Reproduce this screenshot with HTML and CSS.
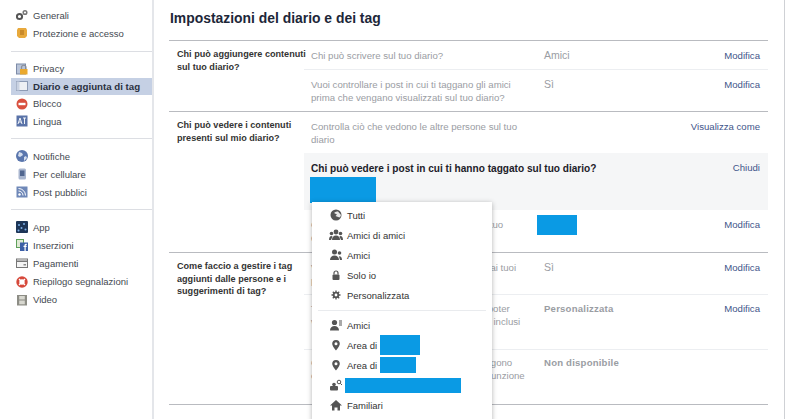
FILE: index.html
```html
<!DOCTYPE html>
<html lang="it">
<head>
<meta charset="utf-8">
<title>Impostazioni del diario e dei tag</title>
<link rel="stylesheet" href="styles.css">
</head>
<body>
<div class="page">
  <aside class="sidebar">
    <ul class="group first">
      <li class="item"><svg class="ic" viewBox="0 0 12 12"><circle cx="3.500" cy="7.500" r="2.600" fill="none" stroke="#555" stroke-width="2"/><circle cx="9" cy="3.500" r="1.800" fill="none" stroke="#777" stroke-width="1.500"/></svg>Generali</li>
      <li class="item"><svg class="ic" viewBox="0 0 12 12"><path d="M2 1h8l1 2v6l-2 2H3L1 9V3z" fill="#e8a93c"/><rect x="4" y="3" width="4" height="5" fill="#c98a2a"/></svg>Protezione e accesso</li>
    </ul>
    <ul class="group second">
      <li class="item"><svg class="ic" viewBox="0 0 12 12"><rect x="0.500" y="1" width="9" height="10" fill="#b9c4d8" stroke="#7d8ba8"/><rect x="4" y="6" width="7.500" height="5.500" fill="#eaa92f"/><path d="M5.500 6V4.500a2.200 2.200 0 0 1 4.500 0V6" fill="none" stroke="#8a8f99" stroke-width="1.200"/></svg>Privacy</li>
      <li class="item active"><svg class="ic" viewBox="0 0 12 12"><rect x="0.500" y="1.500" width="11" height="9" fill="#eef0f4" stroke="#8d9bb5"/><rect x="0.500" y="1.500" width="3" height="9" fill="#c9d2e2"/></svg>Diario e aggiunta di tag</li>
      <li class="item"><svg class="ic" viewBox="0 0 12 12"><circle cx="6" cy="6" r="5.500" fill="#d9503f"/><rect x="2.500" y="4.800" width="7" height="2.400" fill="#fff"/></svg>Blocco</li>
      <li class="item"><svg class="ic" viewBox="0 0 12 12"><rect x="0.500" y="0.500" width="11" height="11" fill="#5a73a8"/><path d="M2 9l2-6 2 6M3 7h2M7 3h3M8.500 3v6" fill="none" stroke="#fff" stroke-width="0.900"/></svg>Lingua</li>
    </ul>
    <ul class="group">
      <li class="item"><svg class="ic" viewBox="0 0 12 12"><circle cx="6" cy="6" r="6" fill="#5a76ad"/><path d="M3 2l3 1 1 2-3 2-2-1zM8 7l2-1 1 2-3 3z" fill="#d5deee"/></svg>Notifiche</li>
      <li class="item"><svg class="ic" viewBox="0 0 12 12"><rect x="2.500" y="0.500" width="7.500" height="11" rx="1.500" fill="#a9b6cf"/><rect x="4" y="2.500" width="4.500" height="5.500" fill="#51668f"/></svg>Per cellulare</li>
      <li class="item"><svg class="ic" viewBox="0 0 12 12"><rect x="0.500" y="0.500" width="11" height="11" fill="#6f88b8"/><circle cx="3.500" cy="8.500" r="1.200" fill="#fff"/><path d="M2.500 5a4.500 4.500 0 0 1 4.500 4.500M2.500 2.500a7 7 0 0 1 7 7" fill="none" stroke="#fff"/></svg>Post pubblici</li>
    </ul>
    <ul class="group fourth">
      <li class="item"><svg class="ic" viewBox="0 0 12 12"><rect width="12" height="12" rx="1" fill="#1d3557"/><circle cx="3" cy="4" r="1" fill="#7db0e8"/><circle cx="8" cy="3" r="1" fill="#7db0e8"/><circle cx="5.500" cy="7" r="1" fill="#7db0e8"/><circle cx="9.500" cy="8.500" r="1" fill="#7db0e8"/><circle cx="2.500" cy="9.500" r="1" fill="#7db0e8"/></svg>App</li>
      <li class="item"><svg class="ic" viewBox="0 0 12 12"><rect x="0.500" y="0.500" width="7" height="8" fill="#dfe9d4" stroke="#5fa05a"/><rect x="4" y="3.500" width="8" height="8.500" fill="#3b5ea6"/><path d="M8.500 12V8H7.500V6.800h1V6q0-1.200 1.500-1.200h.8v1.200h-.6q-.5 0-.5.500v.3h1.100l-.2 1.200h-.9v4z" fill="#fff"/></svg>Inserzioni</li>
      <li class="item"><svg class="ic" viewBox="0 0 12 12"><rect x="0.500" y="2" width="11" height="8.500" fill="#f4f4f4" stroke="#777"/><rect x="1" y="3.500" width="10" height="1.500" fill="#777"/><rect x="7.500" y="7" width="2.500" height="1.500" fill="#888"/></svg>Pagamenti</li>
      <li class="item"><svg class="ic" viewBox="0 0 12 12"><circle cx="6" cy="6" r="4.200" fill="none" stroke="#d6483a" stroke-width="3"/><path d="M3 3l1.500 1.500M9 3L7.500 4.500M3 9l1.500-1.500M9 9L7.500 7.500" stroke="#fff" stroke-width="1.300"/></svg>Riepilogo segnalazioni</li>
      <li class="item"><svg class="ic" viewBox="0 0 12 12"><rect x="1" y="1" width="10" height="10.500" fill="#8d8d85"/><rect x="3.200" y="2" width="5.600" height="3.500" fill="#d8d8d0"/><rect x="3.200" y="6.500" width="5.600" height="3.800" fill="#d8d8d0"/></svg>Video</li>
    </ul>
  </aside>

  <main class="content">
    <h1 class="title">Impostazioni del diario e dei tag</h1>

    <section class="section">
      <h2 class="sec-title">Chi può aggiungere contenuti<br>sul tuo diario?</h2>
      <div class="rows">
        <div class="row r29">
          <div class="desc">Chi può scrivere sul tuo diario?</div>
          <div class="value">Amici</div>
          <a class="link">Modifica</a>
        </div>
        <div class="row last">
          <div class="desc">Vuoi controllare i post in cui ti taggano gli amici<br>prima che vengano visualizzati sul tuo diario?</div>
          <div class="value">Sì</div>
          <a class="link">Modifica</a>
        </div>
      </div>
    </section>

    <section class="section">
      <h2 class="sec-title">Chi può vedere i contenuti<br>presenti sul mio diario?</h2>
      <div class="rows">
        <div class="row last">
          <div class="desc">Controlla ciò che vedono le altre persone sul tuo<br>diario</div>
          <div class="value"></div>
          <a class="link">Visualizza come</a>
        </div>
        <div class="panel">
          <div class="panel-head">
            <strong class="panel-title">Chi può vedere i post in cui ti hanno taggato sul tuo diario?</strong>
            <a class="link">Chiudi</a>
          </div>
          <div class="redact panel-redact"></div>
        </div>
        <div class="row r42 last">
          <div class="desc">Chi può vedere i post in cui ti taggano sul tuo<br>diario?</div>
          <div class="value"><div class="redact value-redact"></div></div>
          <a class="link">Modifica</a>
        </div>
      </div>
    </section>

    <section class="section">
      <h2 class="sec-title">Come faccio a gestire i tag<br>aggiunti dalle persone e i<br>suggerimenti di tag?</h2>
      <div class="rows">
        <div class="row r42">
          <div class="desc">Vuoi controllare i tag che altri aggiungono ai tuoi<br>post prima che appaiano?</div>
          <div class="value">Sì</div>
          <a class="link">Modifica</a>
        </div>
        <div class="row r55">
          <div class="desc">Ti taggano in un post, chi vuoi che possa poter<br>vedere il post anche se non sono mai stati inclusi</div>
          <div class="value strong">Personalizzata</div>
          <a class="link">Modifica</a>
        </div>
        <div class="row r54 last">
          <div class="desc">Chi vede i suggerimenti di tag quando vengono<br>caricate foto che ti ritraggono? Non c'è la funzione</div>
          <div class="value strong">Non disponibile</div>
        </div>
      </div>
    </section>

    <div class="menu">
      <ul class="menu-list">
        <li class="menu-item"><svg class="mi" viewBox="0 0 12 12"><circle cx="6" cy="6" r="5.500" fill="#555"/><path d="M8 2.500a4 4 0 0 0-4 1.500l3 1.500-1.500 1.500 4 1.500A4 4 0 0 0 11 6z" fill="#e8e8e8"/></svg>Tutti</li>
        <li class="menu-item"><svg class="mi wide" viewBox="0 0 14 12"><g fill="#555"><circle cx="7" cy="3" r="2.400"/><path d="M3 11c0-3 1.500-4.500 4-4.500s4 1.500 4 4.500z"/><circle cx="2.500" cy="4.500" r="1.800"/><path d="M0 11c0-2.500 1-4 2.500-4l1 .5L2 11z"/><circle cx="11.500" cy="4.500" r="1.800"/><path d="M14 11c0-2.500-1-4-2.500-4l-1 .5L12 11z"/></g></svg>Amici di amici</li>
        <li class="menu-item"><svg class="mi" viewBox="0 0 12 12"><g fill="#555"><circle cx="4.500" cy="3" r="2.500"/><path d="M0 11c0-3 2-4.500 4.500-4.500S9 8 9 11z"/><circle cx="9.500" cy="4" r="1.800"/><path d="M12 11c0-2.500-1-3.800-2.500-3.800l-.5.300 1 3.500z"/></g></svg>Amici</li>
        <li class="menu-item"><svg class="mi" viewBox="0 0 12 12"><rect x="2.500" y="5.500" width="7" height="5.500" rx="1" fill="#555"/><path d="M4 5.500V4a2 2 0 0 1 4 0v1.500" fill="none" stroke="#555" stroke-width="1.200"/></svg>Solo io</li>
        <li class="menu-item"><svg class="mi" viewBox="0 0 12 12"><circle cx="6" cy="6" r="2.300" fill="none" stroke="#555" stroke-width="1.800"/><path d="M6 1.500v2M6 8.500v2M1.500 6h2M8.500 6h2M2.800 2.800l1.400 1.400M7.800 7.800l1.400 1.400M2.800 9.200l1.400-1.400M7.800 4.200l1.400-1.400" stroke="#555" stroke-width="1.300"/></svg>Personalizzata</li>
      </ul>
      <ul class="menu-list second-list">
        <li class="menu-item"><svg class="mi" viewBox="0 0 12 12"><g fill="#555"><circle cx="4.500" cy="3.500" r="2.600"/><path d="M0 11.500c0-3 2-4.500 4.500-4.500S9 8.500 9 11.500z"/><rect x="9" y="1.500" width="3" height="1"/><rect x="9" y="3.500" width="3" height="1"/><rect x="9" y="5.500" width="3" height="1"/></g></svg>Amici</li>
        <li class="menu-item"><svg class="mi" viewBox="0 0 12 12"><path fill-rule="evenodd" d="M6 1a3.800 3.800 0 0 1 3.800 3.800C9.800 7.300 6 11.500 6 11.500S2.200 7.300 2.200 4.800A3.800 3.800 0 0 1 6 1zm0 2.300a1.500 1.500 0 1 0 0 3A1.500 1.500 0 0 0 6 3.300z" fill="#555"/></svg><span class="area">Area di</span><span class="redact r1"></span></li>
        <li class="menu-item"><svg class="mi" viewBox="0 0 12 12"><path fill-rule="evenodd" d="M6 1a3.800 3.800 0 0 1 3.800 3.800C9.800 7.300 6 11.500 6 11.500S2.200 7.300 2.200 4.800A3.800 3.800 0 0 1 6 1zm0 2.300a1.500 1.500 0 1 0 0 3A1.500 1.500 0 0 0 6 3.300z" fill="#555"/></svg><span class="area">Area di</span><span class="redact r2"></span></li>
        <li class="menu-item"><svg class="mi" viewBox="0 0 12 12"><g fill="#555"><rect x="0" y="7" width="8" height="4.500" rx="1"/><circle cx="4" cy="5.500" r="1.800"/></g><circle cx="9" cy="3" r="1.800" fill="none" stroke="#555"/><path d="M10.300 4.300L12 6" stroke="#555"/></svg><span class="redact r3"></span></li>
        <li class="menu-item"><svg class="mi" viewBox="0 0 12 12"><path d="M6 1l6 5.500h-2V11.500H7.500V8.500h-3V11.500H2V6.500H0z" fill="#555"/></svg>Familiari</li>
      </ul>
    </div>
  </main>
</div>
</body>
</html>
```

FILE: styles.css
```css
* { box-sizing: border-box; }
html, body { margin: 0; padding: 0; height: 419px; overflow: hidden; background: #fff; }
body { font-family: "Liberation Sans", Arial, sans-serif; font-size: 10px; color: #333; }
ul { list-style: none; margin: 0; padding: 0; }
.page { display: flex; width: 785px; height: 419px; border-right: 1px solid #cfd1d5; }

.sidebar { width: 154px; flex: none; border-right: 2px solid #e4e6ea; padding-left: 11px; }
.group { padding: 8px 0; border-bottom: 1px solid #dcdee3; }
.group.first { padding: 6px 0 9px; }
.group.fourth { border-bottom: 0; }
.item { display: flex; align-items: center; gap: 5px; height: 18px; padding-left: 5px; color: #444950; font-size: 9.500px; }
.group.second .item { height: 17.500px; }
.group.fourth .item { height: 18.200px; }
.ic { width: 12px; height: 12px; flex: none; }
.item.active { background: #c5d0e4; font-weight: bold; color: #2a3040; font-size: 9.700px; }

.content { flex: 1; position: relative; padding: 0 16px 0 15px; }
.title { margin: 0; height: 40px; padding: 10px 0 0 1px; font-size: 13.900px; line-height: 16px; font-weight: bold; color: #1d2739; }

.section { display: grid; grid-template-columns: 135px 1fr; border-top: 1px solid #b9bbc0; }
.section:last-of-type { border-bottom: 1px solid #b9bbc0; }
.sec-title { margin: 0; padding: 7px 0 0 8px; font-size: 9.100px; line-height: 12.500px; font-weight: bold; color: #333; white-space: nowrap; }
.rows { display: flex; flex-direction: column; }
.row { display: grid; grid-template-columns: 233px 1fr auto; padding: 8px 8px 0 7px; border-bottom: 1px solid #eceef1; font-size: 9.650px; line-height: 13px; min-height: 41px; }
.row.r29 { min-height: 29px; }
.row.r42 { min-height: 42px; }
.row.r55 { min-height: 55px; padding-top: 7px; }
.row.r54 { min-height: 54px; padding-top: 6px; }
.row.last { border-bottom: 0; }
.desc { color: #9a9da3; white-space: nowrap; }
.value { color: #9a9da3; font-size: 10.500px; }
.value.strong { font-size: 9.600px; font-weight: bold; letter-spacing: 0.200px; }
.link { color: #41558a; font-size: 9.600px; }

.panel { background: #f5f6f7; height: 57px; padding: 9px 8px 0 7px; }
.panel-head { display: flex; justify-content: space-between; }
.panel-title { color: #1d2129; font-size: 10.100px; line-height: 14px; }
.redact { background: #0a9ae4; }
.panel-redact { width: 66px; height: 26px; margin: 1px 0 0 -1px; }
.value-redact { width: 40px; height: 20px; margin: -3px 0 0 -7px; }

.menu { position: absolute; left: 158px; top: 202px; width: 180px; height: 230px; background: #fff; box-shadow: 0 1px 5px rgba(0, 0, 0, 0.3); padding: 4px 6px 0; }
.menu-list:first-child { margin-top: -1px; }
.second-list { margin-top: 5px; padding-top: 4px; border-top: 1px solid #e9ebee; }
.menu-item { display: flex; align-items: center; height: 20px; padding-left: 12px; font-size: 9.500px; color: #333; }
.mi { width: 12px; height: 12px; flex: none; margin-right: 5px; }
.mi.wide { width: 14px; margin: 0 4px 0 -1px; }
.area { width: 33px; flex: none; }
.menu-item .redact { display: block; }
.r1 { width: 40px; height: 20px; }
.r2 { width: 36px; height: 16px; }
.r3 { width: 116px; height: 15px; margin-left: -2px; }
```
